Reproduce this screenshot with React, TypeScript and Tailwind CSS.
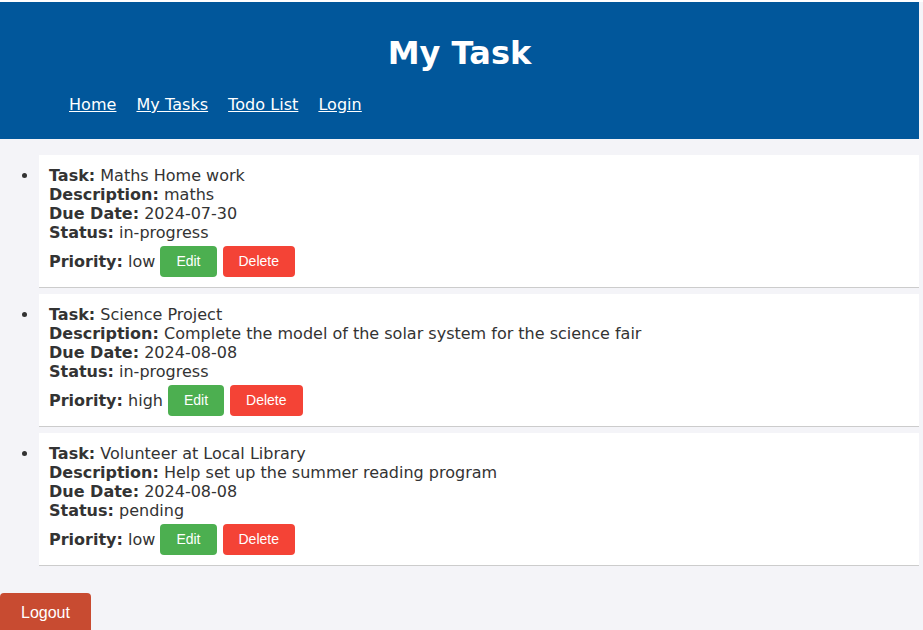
const tasks = [
	{ name: 'Maths Home work', description: 'maths', due: '2024-07-30', status: 'in-progress', priority: 'low' },
	{
		name: 'Science Project',
		description: 'Complete the model of the solar system for the science fair',
		due: '2024-08-08',
		status: 'in-progress',
		priority: 'high',
	},
	{
		name: 'Volunteer at Local Library',
		description: 'Help set up the summer reading program',
		due: '2024-08-08',
		status: 'pending',
		priority: 'low',
	},
]

function TaskItem({ task }: { task: (typeof tasks)[number] }) {
	return (
		<li className="bg-white border-b border-[#cccccc] pt-[11px] pb-[10px] pl-[10px] mb-[6px] leading-[19px]">
			<div>
				<strong>Task:</strong> {task.name}
			</div>
			<div>
				<strong>Description:</strong> {task.description}
			</div>
			<div>
				<strong>Due Date:</strong> {task.due}
			</div>
			<div>
				<strong>Status:</strong> {task.status}
			</div>
			<div className="flex items-center mt-[4px]">
				<span>
					<strong>Priority:</strong> {task.priority}
				</span>
				<button className="ml-[5px] h-[31px] px-4 rounded-[4px] bg-[#4caf50] text-white text-[14px] font-['Liberation_Sans',Arial,sans-serif]">
					Edit
				</button>
				<button className="ml-[6px] h-[31px] px-4 rounded-[4px] bg-[#f44336] text-white text-[14px] font-['Liberation_Sans',Arial,sans-serif]">
					Delete
				</button>
			</div>
		</li>
	)
}

export default function App() {
	return (
		<div className="min-h-[630px] bg-[#f4f4f8] border-t-2 border-white font-['DejaVu_Sans',Verdana,sans-serif] text-[16px] text-[#333333]">
			<div className="w-[919px]">
				<header className="bg-[#01579b] text-white pt-[33px] pb-[25px]">
					<h1 className="text-center text-[32px] font-bold leading-[37px]">My Task</h1>
					<nav className="flex gap-5 pl-[69px] mt-[23px] leading-[19px] tracking-[0.05px]">
						<a href="#" className="underline">Home</a>
						<a href="#" className="underline">My Tasks</a>
						<a href="#" className="underline">Todo List</a>
						<a href="#" className="underline">Login</a>
					</nav>
				</header>
				<ul className="list-disc pl-[39px] mt-4 mb-[27px]">
					{tasks.map((t) => (
						<TaskItem key={t.name} task={t} />
					))}
				</ul>
				<button className="bg-[#c84b31] text-white rounded-[4px] px-[21px] pt-[8px] pb-[12px] text-[16px] font-['Liberation_Sans',Arial,sans-serif]">
					Logout
				</button>
			</div>
		</div>
	)
}
